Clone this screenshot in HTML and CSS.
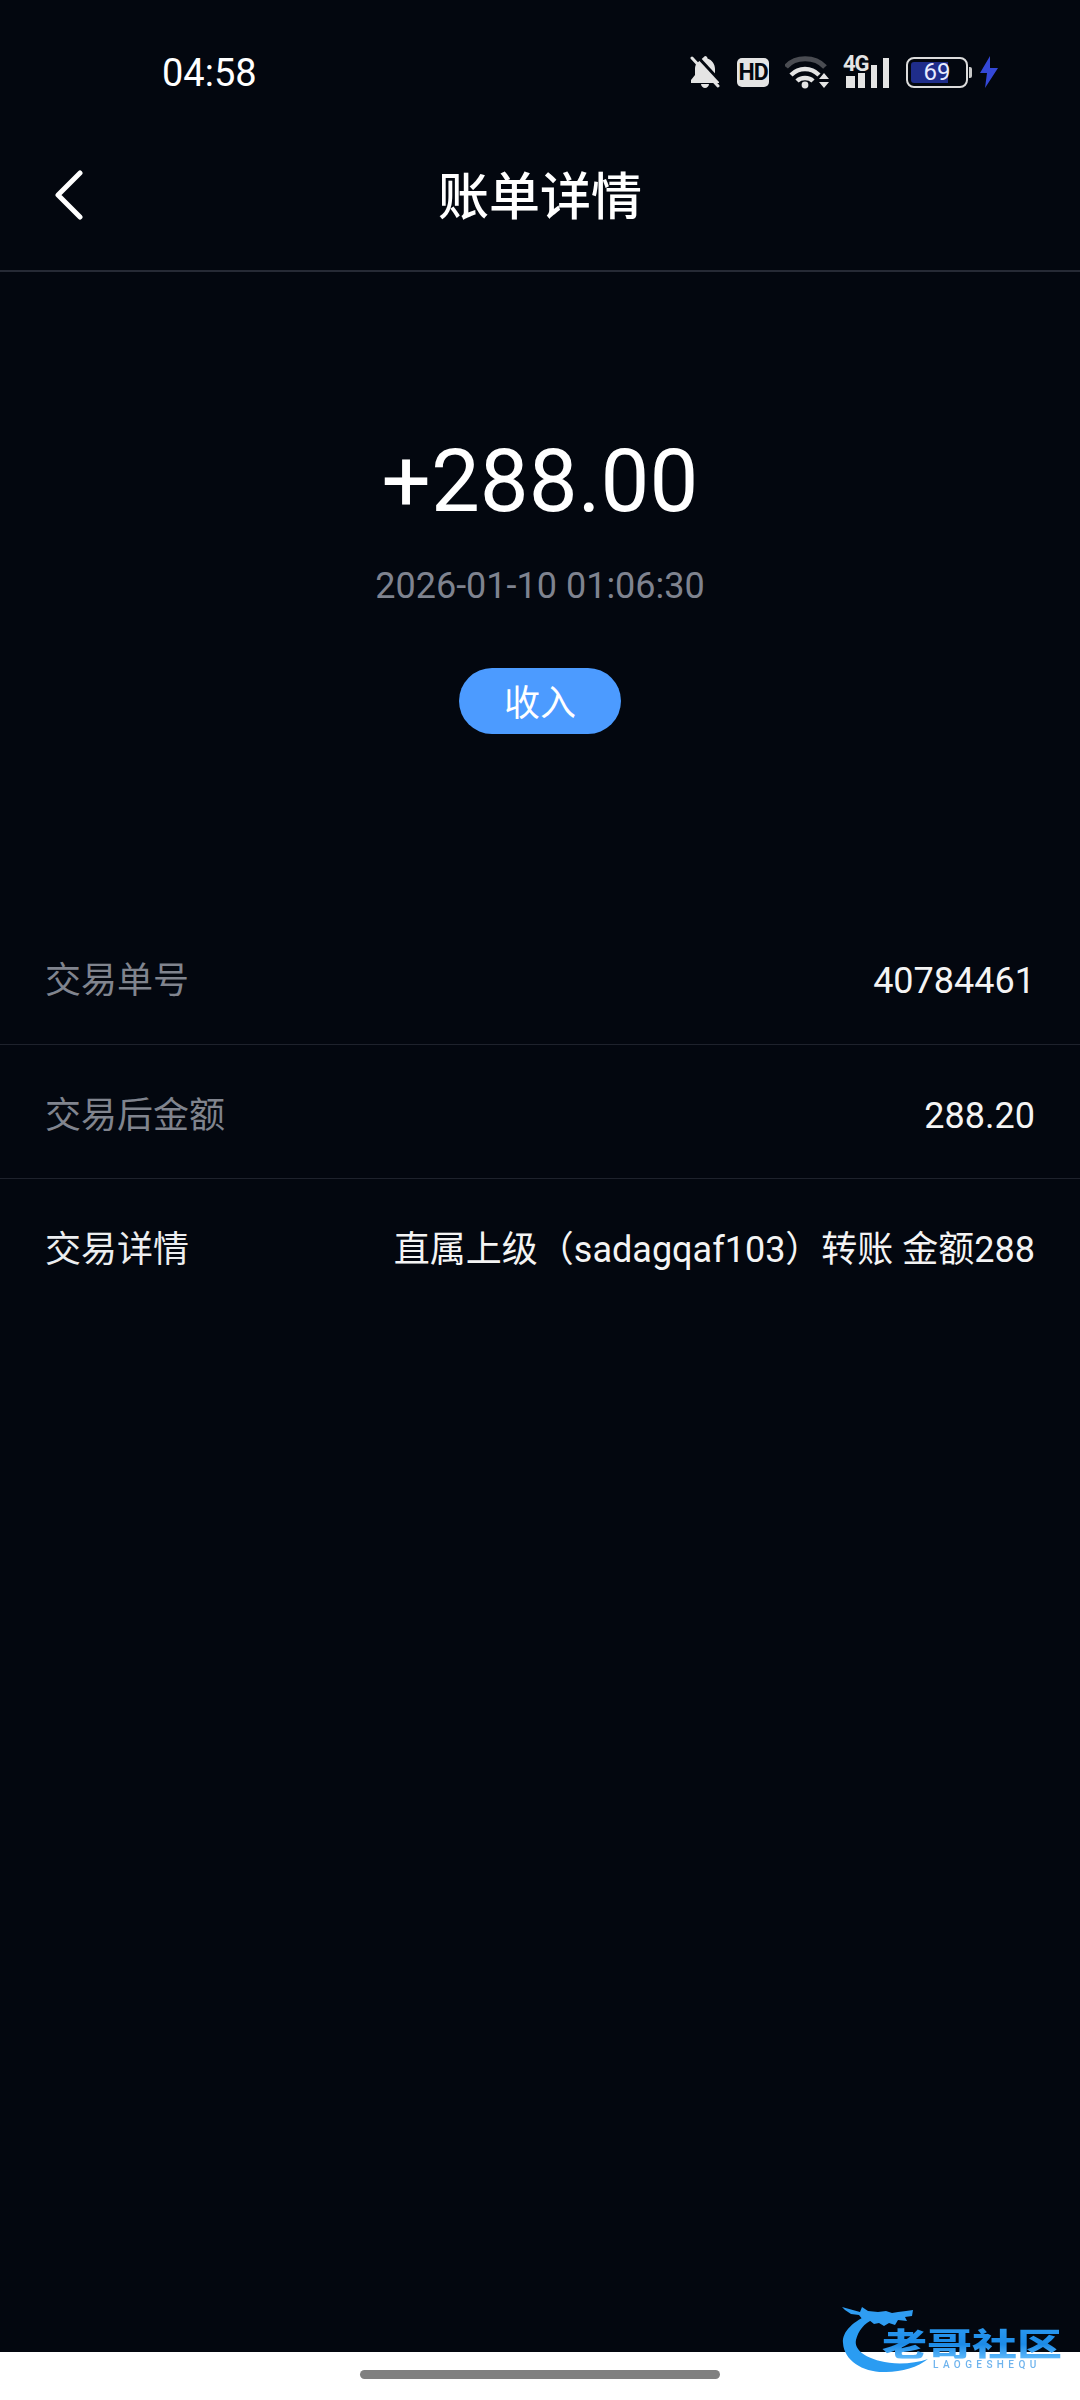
FILE: index.html
```html
<!DOCTYPE html>
<html lang="zh-CN">
<head>
<meta charset="utf-8">
<title>账单详情</title>
<link rel="stylesheet" href="styles.css">
</head>
<body>
<div class="page">
  <header class="status">
    <span class="time">04:58</span>
    <div class="status-icons">
      <svg class="ic-bell" width="30" height="34" viewBox="0 0 30 34">
        <path fill="#e4e4e4" d="M15 1c1.500 0 2.500 1 2.500 2.500C22 5 25 9 25 14v6l4 5v3H1v-3l4-5v-6c0-2 .5-3.500 1-5z"/>
        <path fill="#e4e4e4" d="M11 29h8c0 2-2 4-4 4s-4-2-4-4z"/>
        <path stroke="#03070f" stroke-width="3" fill="none" d="M6 0l25 27"/>
        <path stroke="#e4e4e4" stroke-width="3" stroke-linecap="round" fill="none" d="M2 3l26 28"/>
      </svg>
      <span class="hd">HD</span>
      <svg class="ic-wifi" width="46" height="34" viewBox="0 0 46 34">
        <path fill="none" stroke="#4a4c52" stroke-width="5" d="M1 12C10 1 30 1 40 12"/>
        <path fill="none" stroke="#e4e4e4" stroke-width="4.500" d="M6 20c8-8 20-8 28 0"/>
        <path fill="none" stroke="#e4e4e4" stroke-width="4.500" d="M12 26c4-4 12-4 16 0"/>
        <circle cx="20" cy="30" r="3.400" fill="#e4e4e4"/>
        <path fill="#e4e4e4" d="M39 18l5 6H34zM34 27h10l-5 6z"/>
      </svg>
      <svg class="ic-signal" width="46" height="34" viewBox="0 0 46 34">
        <rect x="3" y="21" width="9" height="12" fill="#e4e4e4"/>
        <rect x="15" y="18" width="7" height="15" fill="#e4e4e4"/>
        <rect x="28" y="10" width="6" height="23" fill="#e4e4e4"/>
        <rect x="40" y="3" width="6" height="30" fill="#e4e4e4"/>
      </svg>
      <span class="net">4G</span>
      <div class="battery">
        <div class="cell"><div class="level"></div><span class="pct">69</span></div>
        <span class="nub"></span>
      </div>
      <svg class="ic-bolt" width="20" height="32" viewBox="0 0 20 32">
        <path fill="#3448d8" d="M11 0L1 17h7L6 32l13-20h-8z"/>
      </svg>
    </div>
  </header>

  <nav class="nav">
    <svg class="back" width="30" height="50" viewBox="0 0 30 50">
      <path fill="none" stroke="#fff" stroke-width="5" stroke-linecap="round" stroke-linejoin="round" d="M26 3L4 25l22 22"/>
    </svg>
    <h1 class="title">账单详情</h1>
  </nav>

  <section class="hero">
    <div class="amount">+288.00</div>
    <div class="date">2026-01-10 01:06:30</div>
    <div class="pill">收入</div>
  </section>

  <section class="list">
    <div class="row"><span class="label">交易单号</span><span class="value">40784461</span></div>
    <div class="row"><span class="label">交易后金额</span><span class="value">288.20</span></div>
    <div class="row row-last"><span class="label label-on">交易详情</span><span class="value">直属上级（sadagqaf103）转账 金额288</span></div>
  </section>

  <footer class="home"><span class="home-bar"></span></footer>

  <div class="logo">
    <svg class="logo-mark" width="90" height="74" viewBox="0 0 90 74">
      <path fill="#2a9cf2" d="M28 11C12 18 0 28 1 40C2 58 22 70 44 69C60 69 76 64 86 56C72 61 52 62 38 58C22 54 12 46 14 37C16 28 22 20 32 16Z"/>
      <path fill="#2f9df2" d="M0 4l18 5 2-5 6 4 10 1 8-1 6 2 6-1 8-1 7-1-1 6-7 1 2 4-9-1-3 5-6-2-5 3-5-3-5 1-5-4-6 0-4-5-8-1-6-4z"/>
    </svg>
    <span class="logo-name">老哥社区</span>
    <span class="logo-sub">LAOGESHEQU</span>
  </div>
</div>
</body>
</html>
```
FILE: styles.css
```css
* { box-sizing: border-box; }
html, body { margin: 0; padding: 0; }
body {
  width: 1080px;
  height: 2400px;
  overflow: hidden;
  background: #03070f;
  font-family: Roboto, "Noto Sans CJK SC", sans-serif;
  color: #fff;
}
.page {
  position: relative;
  width: 1080px;
  height: 2400px;
  display: flex;
  flex-direction: column;
}
.status {
  height: 112px;
  padding: 55px 81px 0 162px;
  display: flex;
  justify-content: space-between;
  align-items: flex-start;
  flex: none;
}
.time {
  font-size: 38px;
  line-height: 36px;
  color: #fff;
}
.status-icons {
  position: relative;
  display: flex;
  align-items: center;
  height: 34px;
}
.ic-bell { margin-right: 17px; }
.hd {
  width: 32px;
  height: 29px;
  border-radius: 5px;
  background: #e4e4e4;
  color: #03070f;
  font: 700 23px/29px "Roboto", sans-serif;
  text-align: center;
  letter-spacing: -1px;
  margin-right: 16px;
}
.ic-wifi { margin-right: 12px; }
.ic-signal { margin-right: 17px; }
.net {
  position: absolute;
  left: 153px;
  top: -1px;
  font: 700 22px/20px "Roboto", sans-serif;
  letter-spacing: -1px;
  color: #e4e4e4;
}
.battery { display: flex; align-items: center; margin-right: 7px; }
.cell {
  position: relative;
  width: 62px;
  height: 31px;
  border: 2px solid #dcdcdc;
  border-radius: 8px;
  padding: 3px;
}
.level {
  width: 37px;
  height: 100%;
  background: #1f2d8a;
  border-radius: 3px 0 0 3px;
}
.pct {
  position: absolute;
  inset: 0;
  text-align: center;
  font: 400 24px/27px "Roboto", sans-serif;
  color: #e8ecff;
}
.nub { width: 3px; height: 11px; margin-left: 1px; background: #c8c8c8; border-radius: 0 2px 2px 0; }
.nav {
  position: relative;
  flex: none;
  height: 160px;
  border-bottom: 2px solid #262a35;
  display: flex;
  align-items: center;
  justify-content: center;
}
.back { position: absolute; left: 54px; top: 58px; }
.title {
  margin: 0;
  margin-top: 4px;
  font: 500 51px/72px "Noto Sans CJK SC", sans-serif;
  color: #fff;
}
.hero {
  flex: none;
  height: 638px;
  padding-top: 156px;
  display: flex;
  flex-direction: column;
  align-items: center;
}
.amount { font-size: 87px; line-height: 106px; color: #fff; }
.date { margin-top: 30px; font-size: 36px; line-height: 44px; color: #7f838f; }
.pill {
  margin-top: 60px;
  width: 162px;
  height: 66px;
  padding-top: 3px;
  border-radius: 33px;
  background: #4c9bff;
  color: #fff;
  text-align: center;
  font-size: 36px;
  line-height: 66px;
}
.list { flex: none; }
.row {
  height: 134.500px;
  padding: 49px 45px 0 45px;
  border-bottom: 1px solid #1e222c;
  display: flex;
  justify-content: space-between;
  align-items: baseline;
  font-size: 36px;
  line-height: 44px;
}
.row-last { border-bottom: 0; }
.label { color: #80848e; }
.label-on { color: #eceef0; }
.value { color: #f4f4f4; }
.home {
  margin-top: auto;
  flex: none;
  height: 48px;
  background: #fff;
  display: flex;
  justify-content: center;
  padding-top: 18px;
}
.home-bar { width: 360px; height: 9px; border-radius: 5px; background: #808080; }
.logo {
  position: absolute;
  left: 842px;
  top: 2303px;
  width: 225px;
  height: 74px;
  filter: blur(0.6px);
}
.logo-mark { position: absolute; left: 0; top: 0; }
.logo-name {
  position: absolute;
  left: 40px;
  top: 24px;
  font: 900 45px/45px "Noto Sans CJK SC", sans-serif;
  white-space: nowrap;
  transform: scaleY(0.7);
  transform-origin: 0 0;
  background: linear-gradient(180deg, #2a98f0 0%, #1c8ae6 55%, #5cb8fb 100%);
  -webkit-background-clip: text;
  background-clip: text;
  color: transparent;
}
.logo-sub {
  position: absolute;
  left: 91px;
  top: 56px;
  font: 500 10px/12px Roboto, sans-serif;
  letter-spacing: 4.400px;
  color: #6fb4ee;
}
```
